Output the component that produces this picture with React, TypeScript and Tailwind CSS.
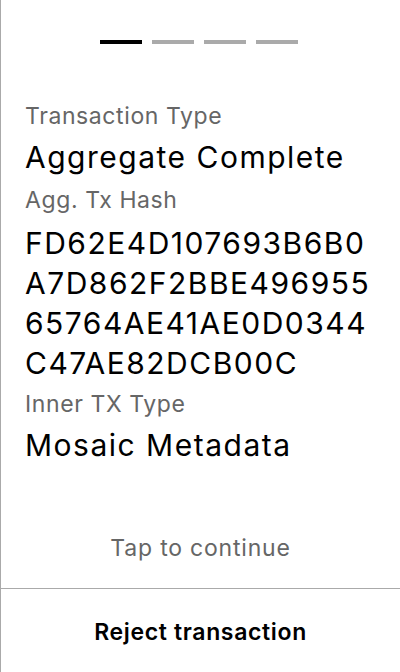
import React from 'react';

const steps = [true, false, false, false];

const txHash = 'FD62E4D107693B6B0A7D862F2BBE49695565764AE41AE0D0344C47AE82DCB00C';

// the device screen wraps the hash at 17 chars a line
const chunk = (s: string, n: number) => s.match(new RegExp(`.{1,${n}}`, 'g')) ?? [];

const Label = ({ children, className = '' }: { children: React.ReactNode; className?: string }) => (
  <div className={`text-[23px] leading-[28px] tracking-[0.6px] text-[#666666] ${className}`}>{children}</div>
);

const Value = ({ children, className = '' }: { children: React.ReactNode; className?: string }) => (
  <div className={`text-[30px] leading-[39px] tracking-[1.5px] text-black ${className}`}>{children}</div>
);

export default function App() {
  return (
    <div
      className="w-[400px] h-[672px] bg-white border-l border-[#aaaaaa] flex flex-col"
      style={{ fontFamily: 'Inter, "Noto Sans", sans-serif' }}
    >
      <div className="flex justify-center gap-[10px] pt-[40px] pr-[3px]">
        {steps.map((active, i) => (
          <div key={i} className={active ? 'w-[42px] h-[4px] bg-black' : 'w-[42px] h-[4px] bg-[#aaaaaa]'} />
        ))}
      </div>

      <div className="flex flex-col pl-[24px] pt-[58px]">
        <Label>Transaction Type</Label>
        <Value className="mt-[8px]">Aggregate Complete</Value>

        <Label className="mt-[9px]">Agg. Tx Hash</Label>
        <div className="mt-[9px] flex flex-col">
          {chunk(txHash, 17).map((line) => (
            <Value key={line} className="leading-[40px]">{line}</Value>
          ))}
        </div>

        <Label className="mt-[7px]">Inner TX Type</Label>
        <Value className="mt-[8px]">Mosaic Metadata</Value>
      </div>

      <div className="flex-1" />

      <div className="flex justify-center pb-[26px]">
        <span className="text-[23px] leading-[28px] tracking-[0.8px] text-[#666666]">Tap to continue</span>
      </div>

      <div className="border-t border-[#aaaaaa] h-[84px] pt-[29px] flex justify-center">
        <span className="text-[23px] leading-[28px] tracking-[0.65px] font-semibold text-black">Reject transaction</span>
      </div>
    </div>
  );
}
